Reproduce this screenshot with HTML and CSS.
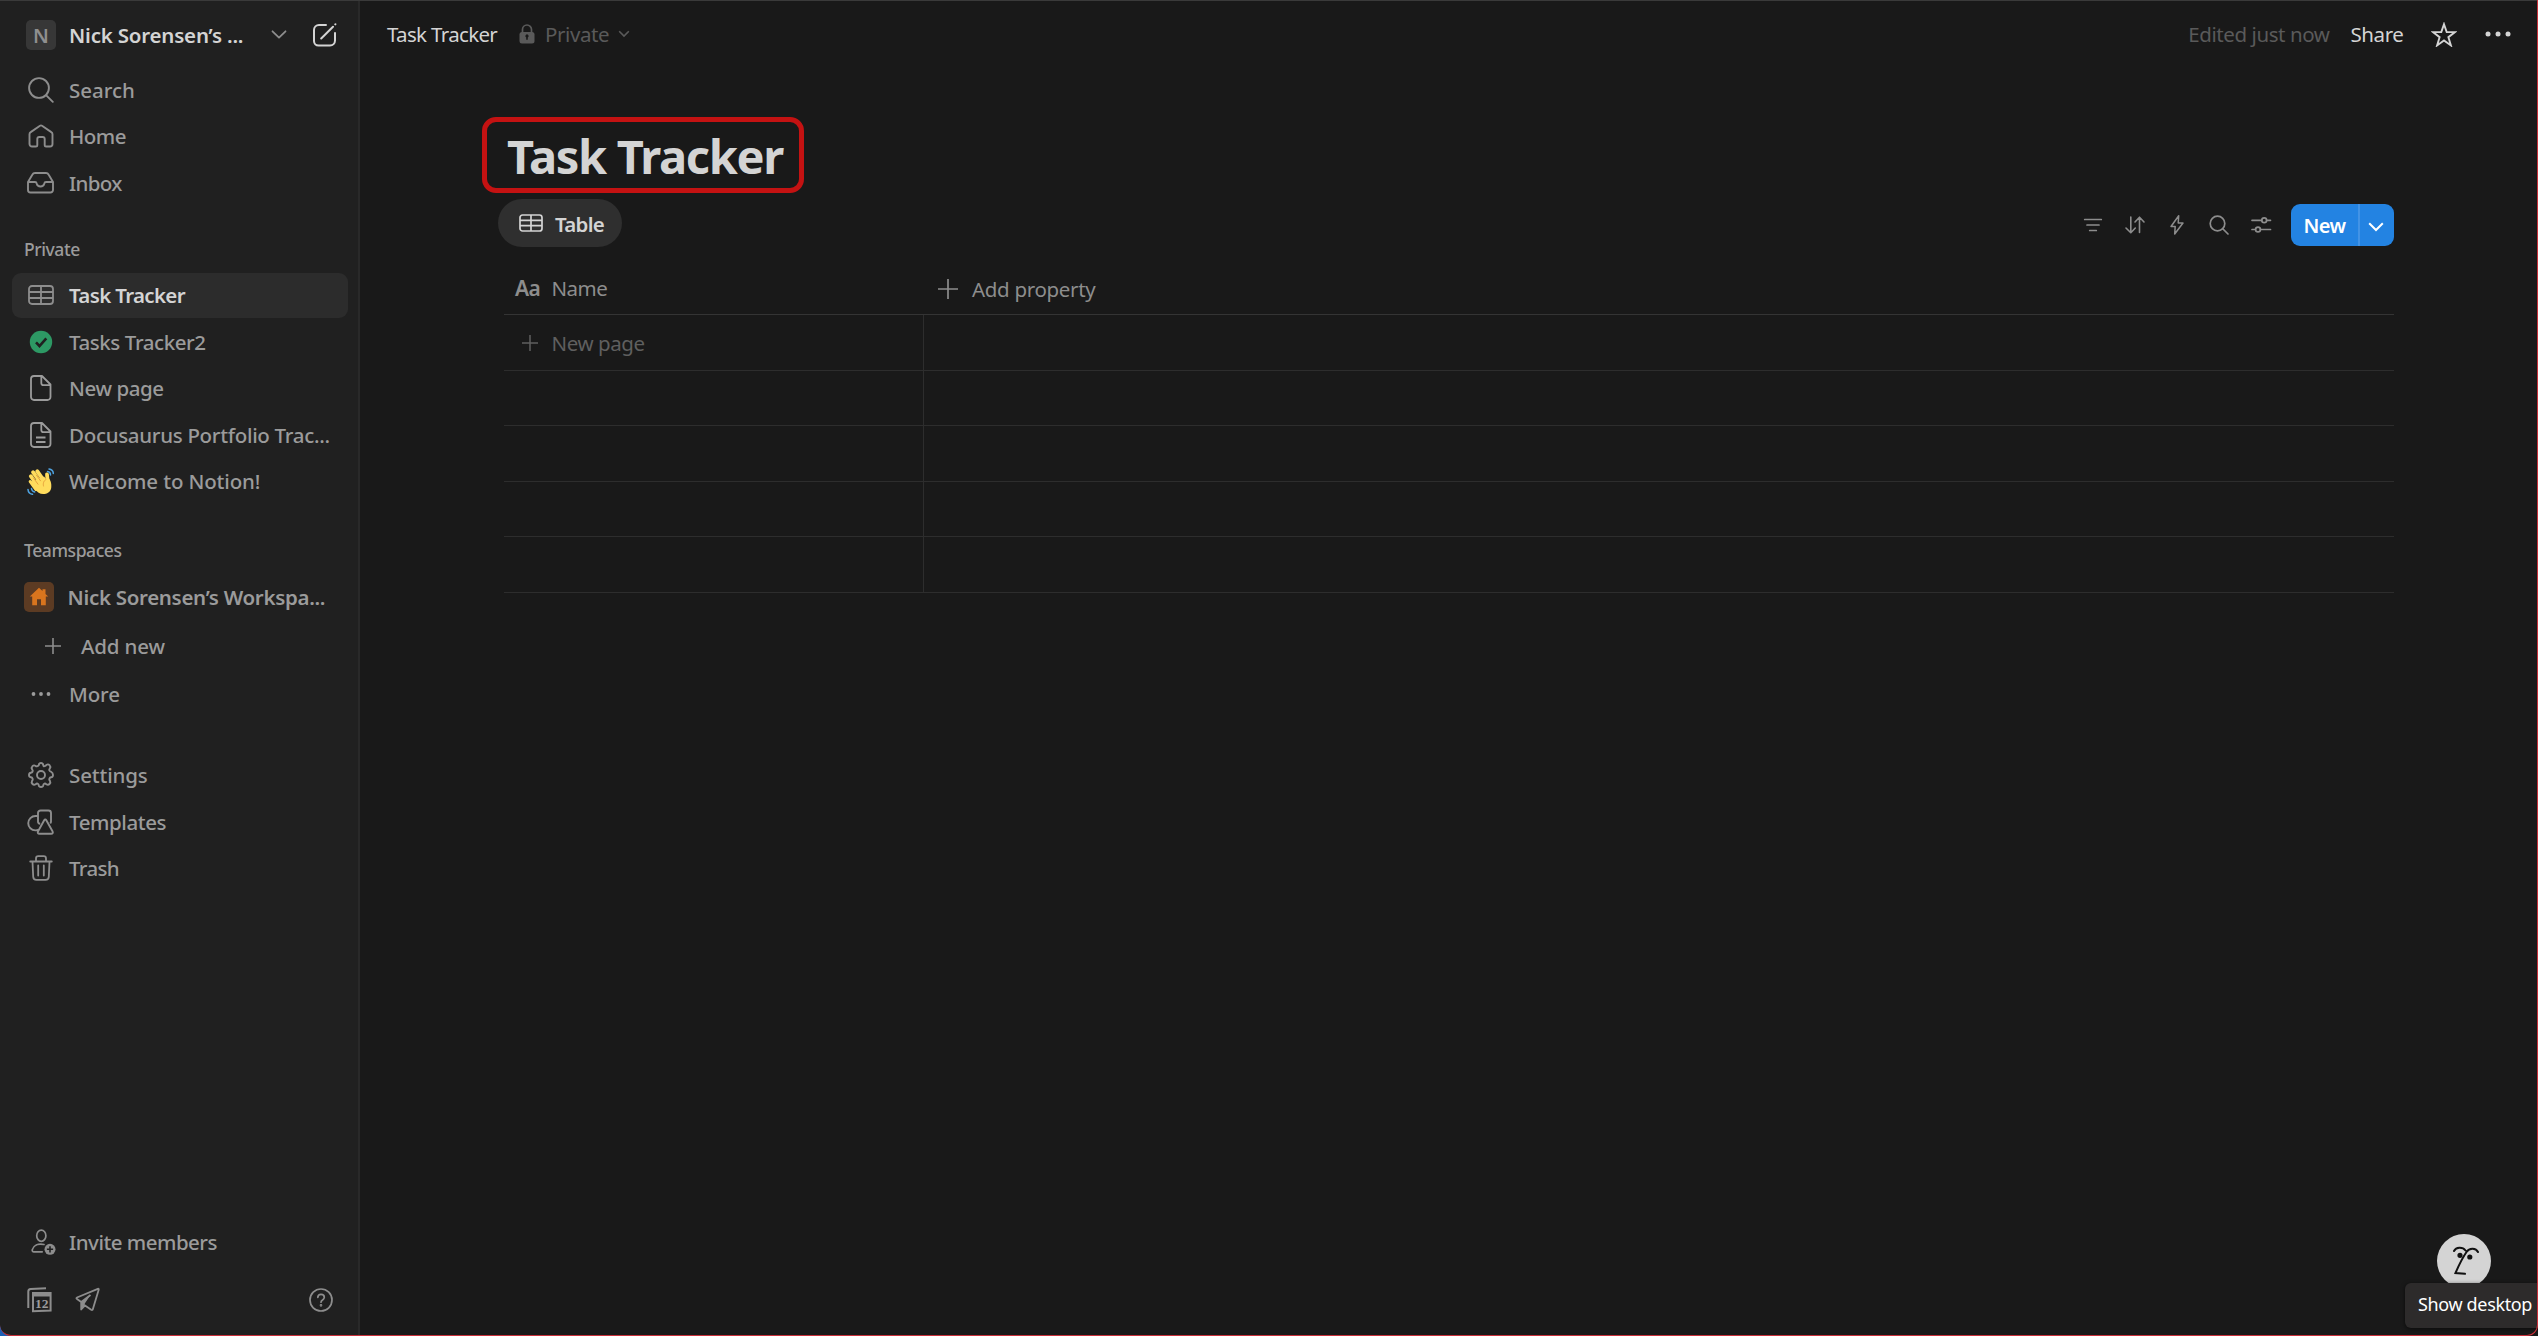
FILE: index.html
```html
<!DOCTYPE html>
<html lang="en">
<head>
<meta charset="utf-8">
<title>Task Tracker</title>
<link rel="stylesheet" href="styles.css">
</head>
<body>
<div class="app">
  <aside class="sidebar">
    <header class="workspace">
      <span class="avatar">N</span>
      <span class="workspace-name ls-2">Nick Sorensen’s ...</span>
      <svg class="workspace-caret" width="16" height="10" viewBox="0 0 16 10" fill="none" stroke="#8d8d8d" stroke-width="1.8" stroke-linecap="round" stroke-linejoin="round"><path d="M1.5 1.3 8 7.6l6.500-6.300"/></svg>
      <svg width="24" height="24" viewBox="0 0 24 24" fill="none" stroke="#d4d4d4" stroke-width="2" stroke-linecap="round"><path d="M13 2H6a5 5 0 0 0-5 5v11a4.500 4.500 0 0 0 4.500 4.500h11.500a5 5 0 0 0 5-5V10M8.200 15.500 20 3.700M22.300 1.400l.1-.1"/></svg>
    </header>
    <nav>
      <a class="item"><span class="icon"><svg width="26" height="26" viewBox="0 0 26 26" fill="none" stroke="#8d8d8d" stroke-width="1.9" stroke-linecap="round"><circle cx="11" cy="11" r="9.900"/><path d="m18.300 18.300 6.500 6.500"/></svg></span><span class="ls-0">Search</span></a>
      <a class="item"><span class="icon"><svg width="26" height="24" viewBox="0 0 26 24" fill="none" stroke="#8d8d8d" stroke-width="1.900" stroke-linejoin="round"><path d="M1.500 10.300c0-1 .4-1.700 1.200-2.200L12 1.700c.6-.4 1.400-.4 2 0l9.300 6.400c.8.500 1.200 1.200 1.200 2.200V20a2.500 2.500 0 0 1-2.500 2.500h-4c-.8 0-1.300-.5-1.300-1.300V15c0-1.300-.7-2-2-2h-3.400c-1.300 0-2 .7-2 2v6.200c0 .8-.5 1.300-1.300 1.300H4A2.500 2.500 0 0 1 1.500 20z"/></svg></span><span class="ls-5">Home</span></a>
      <a class="item"><span class="icon"><svg width="27" height="22" viewBox="0 0 27 22" fill="none" stroke="#8d8d8d" stroke-width="1.900" stroke-linejoin="round"><path d="M1 10v8a2.500 2.500 0 0 0 2.500 2.500h20A2.500 2.500 0 0 0 26 18v-8l-4.300-7.200C21 1.500 20.300 1 19 1H8C6.700 1 6 1.500 5.300 2.800zM1 10h7c1 0 1.500.5 1.700 1.500a3.900 3.900 0 0 0 7.600 0c.2-1 .7-1.500 1.700-1.500h7"/></svg></span><span class="ls-6">Inbox</span></a>
    </nav>

    <h2 class="label label-private ls-4">Private</h2>
    <nav>
      <a class="item active"><span class="icon"><svg width="26" height="20" viewBox="0 0 26 20" fill="none" stroke="#8d8d8d" stroke-width="1.800"><rect x="1" y="1" width="24" height="18" rx="3"/><path d="M1 7h24M1 13h24M13 1v18"/></svg></span><span class="ls-6">Task Tracker</span></a>
      <a class="item"><span class="icon"><svg width="24" height="24" viewBox="0 0 24 24"><circle cx="12" cy="12" r="11.200" fill="#2d9964"/><path d="m7 12.300 3.500 3.700 6.800-7.700" fill="none" stroke="#202020" stroke-width="2.600"/></svg></span><span class="ls-4">Tasks Tracker2</span></a>
      <a class="item"><span class="icon"><svg width="22" height="26" viewBox="0 0 22 26" fill="none" stroke="#9b9b9b" stroke-width="1.800" stroke-linejoin="round"><path d="M4 1h8l8.500 8.500V22a3 3 0 0 1-3 3H4a3 3 0 0 1-3-3V4a3 3 0 0 1 3-3zM11.300 1v7c0 1.500.7 2.200 2.200 2.200h7"/></svg></span><span class="ls-4">New page</span></a>
      <a class="item"><span class="icon"><svg width="22" height="26" viewBox="0 0 22 26" fill="none" stroke="#9b9b9b" stroke-width="1.800" stroke-linejoin="round"><path d="M4 1h8l8.500 8.500V22a3 3 0 0 1-3 3H4a3 3 0 0 1-3-3V4a3 3 0 0 1 3-3zM11.300 1v7c0 1.500.7 2.200 2.200 2.200h7M6 15.500h9.500M6 20h9.500"/></svg></span><span class="ls-3">Docusaurus Portfolio Trac...</span></a>
      <a class="item"><span class="icon"><svg width="27" height="27" viewBox="0 0 27 27" fill="none" stroke-linecap="round"><g stroke="#4fa3e0" stroke-width="1.500"><path d="M20.500 3.500c2 .3 3 1.600 3 3.500M22 1c2.700.4 4.200 2 4.300 4.500M4.500 20.500c.2 2 1.300 3.200 3.200 3.500M1 21.500c.2 2.700 1.700 4.400 4.500 4.800"/></g><path d="M3.200 13.500 9 21.500" stroke="#ffdc5d" stroke-width="3"/><path d="m3.800 8.200 6.700 9.300M6 4.200l7.500 10.300M10.200 3.200l7 9.800M20 6.500l.8 8" stroke="#ffdc5d" stroke-width="3.800"/><path d="M4.500 13.500 17 8.500l2.500 3 1-2c2.500 1 4.500 5.500 3.700 10.500-.8 4-4 6-8 6-3.500 0-6-2-8-4.500z" fill="#ffdc5d"/><path d="M6.500 10l4.500 6.200M9.500 7.200l4 5.600M19 11.500c-2.700 1.500-3 4-2.500 6.500" stroke="#e8a23c" stroke-width="1"/></svg></span><span class="ls-1">Welcome to Notion!</span></a>
    </nav>

    <h2 class="label label-teams ls-4">Teamspaces</h2>
    <nav>
      <a class="item item-team"><span class="team-icon"><svg width="20" height="20" viewBox="0 0 20 20" fill="#d9751e"><path d="M10 .8.800 9.500h2.400v8.700h4.800v-6h4v6h4.800V9.500h2.400l-2.700-2.600V2.200h-3v1.700z"/></svg></span><span class="ls-3">Nick Sorensen’s Workspa...</span></a>
      <a class="item item-add"><svg width="16" height="16" viewBox="0 0 16 16" stroke="#8d8d8d" stroke-width="1.600"><path d="M8 0v16M0 8h16"/></svg><span class="ls-1">Add new</span></a>
      <a class="item"><span class="icon"><svg width="20" height="6" viewBox="0 0 20 6" fill="#9b9b9b"><circle cx="2.500" cy="3" r="1.900"/><circle cx="10" cy="3" r="1.900"/><circle cx="17.500" cy="3" r="1.900"/></svg></span><span class="ls-1">More</span></a>
    </nav>
    <nav class="tools">
      <a class="item"><span class="icon"><svg width="26" height="26" viewBox="0 0 26 26" fill="none" stroke="#8d8d8d" stroke-width="1.900" stroke-linejoin="round"><path d="M10.700 3.300Q11 1 13 1t2.300 2.300q.1 1.300 1.300.9t1.700-1.200q1.800-1.300 3.200.1t.4 3.200q-1 1.100-.5 2.200.5 1.200 1.700 1.200Q25 10.800 25 13t-1.900 2.300q-1.200.2-1.700 1.300t.5 2.200q1 1.800-.4 3.200t-3.200.2q-1-.9-1.900-.5-1 .4-1.100 1.500Q15 25 13 25t-2.300-1.800q-.1-1.100-1.100-1.500-.9-.4-1.900.5-1.800 1.200-3.200-.2t-.4-3.200q1-1.100.5-2.200t-1.700-1.300Q1 15 1 13t1.900-2.300q1.200-.1 1.700-1.200t-.5-2.200Q3.100 5.500 4.500 4.100T7.700 4q.7.600 1.700.2t1.300-.9z"/><circle cx="13" cy="13" r="4"/></svg></span><span class="ls-1">Settings</span></a>
      <a class="item"><span class="icon"><svg width="27" height="26" viewBox="0 0 27 26" fill="none" stroke="#8d8d8d" stroke-width="1.900" stroke-linejoin="round"><path d="M10.700 7H8.500a7.200 7.200 0 0 0-.1 14.400c1.500 0 2.500-.2 3.500-.8M11 13.200V4a2.500 2.500 0 0 1 2.500-2.500h8A2.500 2.500 0 0 1 24 4v8.500c0 .8-.3 1.400-.8 1.900M11 12.500c0 1.400.8 2.200 2.200 2.300M17.200 11.300c.6-1 1.500-1 2.100 0l6.200 11c.7 1.400.2 2.500-1.300 2.500H12.400c-1.500 0-2-1.100-1.300-2.500z"/></svg></span><span class="ls-4">Templates</span></a>
      <a class="item"><span class="icon"><svg width="24" height="26" viewBox="0 0 24 26" fill="none" stroke="#8d8d8d" stroke-width="1.800" stroke-linecap="round" stroke-linejoin="round"><path d="M1.200 6.500h21.600M7 6.200V3.500C7 2 7.800 1.200 9.300 1.200h5.400c1.500 0 2.300.8 2.300 2.300v2.700M3.500 6.700l.7 15c.1 2 1.300 3.100 3.300 3.100h9c2 0 3.200-1.100 3.300-3.100l.7-15M9.200 10.500v10M14.800 10.500v10"/></svg></span><span class="ls-6">Trash</span></a>
    </nav>

    <nav class="bottom">
      <a class="item"><span class="icon icon-invite"><svg width="25" height="26" viewBox="0 0 25 26" fill="none" stroke="#8d8d8d" stroke-width="1.700" stroke-linecap="round"><ellipse cx="10.300" cy="6.700" rx="4.600" ry="5.600"/><path d="M13 15.500c-6-1.300-10.500.8-11.700 5.200-.3 1.400.3 2.100 1.600 2.100h8.300"/><circle cx="19" cy="20.300" r="5.500" fill="#8d8d8d" stroke="none"/><path d="M19 17.200v6.200M15.900 20.300h6.200" stroke="#202020" stroke-width="1.600" stroke-linecap="butt"/></svg></span><span class="ls-5">Invite members</span></a>
      <div class="links">
        <svg width="25" height="26" viewBox="0 0 25 26"><g fill="none" stroke="#8d8d8d" stroke-width="2"><path d="M1.300 21V4.500C1.300 2.800 2 2 3.700 1.900L19 1.300"/><path d="M6 6h17.600v17.500L6 24.300z"/></g><path d="M5.500 5.500h18.500v4H5.500z" fill="#8d8d8d"/><text x="14.800" y="21" text-anchor="middle" class="calendar-day">12</text></svg>
        <svg width="25" height="25" viewBox="0 0 25 25" fill="none" stroke="#8d8d8d" stroke-width="1.800" stroke-linejoin="round"><path d="M22.800 1.800 2 10.500c-.8.400-.8 1 0 1.500l4.200 3v7.500l3.800-4 6.200 4.300c.8.500 1.500.2 1.700-.7l5.800-19.300c.2-.8-.2-1.300-.9-1zM6.200 15 15.500 8"/><path d="M6.200 15 15.500 8 9.800 16.500v2L6.200 22z" fill="#8d8d8d" stroke="none"/></svg>
        <svg class="help" width="24" height="24" viewBox="0 0 24 24" fill="none" stroke="#8d8d8d" stroke-width="1.700" stroke-linecap="round"><circle cx="12" cy="12" r="11"/><path d="M8.800 9.400C8.900 7.500 10.200 6.400 12 6.400s3.300 1.200 3.300 2.900c0 1.300-.7 2-1.700 2.600s-1.600 1.200-1.600 2.300"/><circle cx="12" cy="17.300" r=".5"/></svg>
      </div>
    </nav>
  </aside>

  <main class="main">
    <header class="topbar">
      <span class="crumb ls-6">Task Tracker</span>
      <svg class="lock" width="16" height="20" viewBox="0 0 16 20"><path d="M3.500 9V5.500a4.500 4.500 0 0 1 9 0V9" fill="none" stroke="#5a5a5a" stroke-width="1.700"/><rect x=".5" y="8" width="15" height="11.500" rx="2.500" fill="#5a5a5a"/><path d="M7.200 13.500a1.600 1.600 0 1 1 1.600 0v2.300H7.200z" fill="#191919"/></svg>
      <span class="privacy ls-4">Private</span>
      <svg width="12" height="8" viewBox="0 0 12 8" fill="none" stroke="#5a5a5a" stroke-width="1.600"><path d="m1.200 1.300 4.800 4.800 4.800-4.800"/></svg>
      <span class="edited ls-4">Edited just now</span>
      <span class="share ls-4">Share</span>
      <svg class="star" width="26" height="25" viewBox="0 0 26 25" fill="none" stroke="#d4d4d4" stroke-width="1.900"><path d="m13 2.200 2.700 7.900h8.400l-6.700 5.100 2.500 8.200-6.900-4.900-6.900 4.900 2.500-8.200-6.700-5.100h8.400z"/></svg>
      <svg width="26" height="6" viewBox="0 0 26 6" fill="#d4d4d4"><circle cx="3" cy="3" r="2.500"/><circle cx="13" cy="3" r="2.500"/><circle cx="23" cy="3" r="2.500"/></svg>
    </header>

    <section class="page">
      <h1 class="title">Task Tracker</h1>
      <div class="viewbar">
        <span class="tab"><svg width="24" height="18" viewBox="0 0 24 18" fill="none" stroke="#d4d4d4" stroke-width="1.700"><rect x="1" y="1" width="22" height="16" rx="2.500"/><path d="M1 6.300h22M1 11.700h22M12 1v16"/></svg><span class="tab-name">Table</span></span>
        <div class="actions">
          <svg width="22" height="22" viewBox="0 0 22 22" fill="none" stroke="#8d8d8d" stroke-width="1.700" stroke-linecap="round"><path d="M2.700 5.500h16.600M5 11h12M7.700 16.500h6.600"/></svg>
          <svg width="22" height="22" viewBox="0 0 22 22" fill="none" stroke="#8d8d8d" stroke-width="1.600" stroke-linecap="round" stroke-linejoin="round"><path d="M6.800 3v15.500M2 14l4.800 4.700 4.500-4.700M15.500 18.500V3.300M11 8l4.500-4.700L20 8"/></svg>
          <svg width="22" height="22" viewBox="0 0 22 22" fill="none" stroke="#8d8d8d" stroke-width="1.500" stroke-linejoin="round"><path d="M12.700 1.800 5 12.500h4.200L8.700 20l8.300-11h-4.800z"/></svg>
          <svg width="22" height="22" viewBox="0 0 22 22" fill="none" stroke="#8d8d8d" stroke-width="1.700" stroke-linecap="round"><circle cx="9.500" cy="9.500" r="7.300"/><path d="m15 15 5 5"/></svg>
          <svg width="22" height="22" viewBox="0 0 22 22" fill="none" stroke="#8d8d8d" stroke-width="1.700" stroke-linecap="round"><path d="M2 6.300h9.700M16.700 6.300h3.800M2 15.500h3.300M10.500 15.500h10"/><circle cx="14.200" cy="6.300" r="2.400"/><circle cx="8" cy="15.500" r="2.400"/></svg>
          <button class="new"><span class="new-label">New</span><span class="new-caret"><svg width="16" height="10" viewBox="0 0 16 10" fill="none" stroke="#fff" stroke-width="2"><path d="m1.200 1.300 6.800 6.700 6.800-6.700"/></svg></span></button>
        </div>
      </div>

      <div class="table">
        <div class="table-head">
          <div class="name-cell"><span class="type-icon">Aa</span><span class="ls-5">Name</span></div>
          <div class="add-property"><svg width="20" height="20" viewBox="0 0 20 20" stroke="#8d8d8d" stroke-width="1.700"><path d="M10 0v20M0 10h20"/></svg><span class="ls-3">Add property</span></div>
        </div>
        <div class="table-row"><div class="cell new-page"><svg width="16" height="16" viewBox="0 0 16 16" stroke="#5f5f5f" stroke-width="1.500"><path d="M8 0v16M0 8h16"/></svg><span class="ls-4">New page</span></div></div>
        <div class="table-row"><div class="cell"></div></div>
        <div class="table-row"><div class="cell"></div></div>
        <div class="table-row"><div class="cell"></div></div>
        <div class="table-row"><div class="cell"></div></div>
      </div>
    </section>
  </main>

  <svg class="assistant" width="56" height="56" viewBox="0 0 56 56" fill="none" stroke="#111" stroke-width="2" stroke-linecap="round"><circle cx="28" cy="28" r="27" fill="#d4d4d4" stroke="none"/><path d="M18 18c2-4 8.500-4.500 11.500-.5M42 19c-2-4-8.500-4.500-11.500 0-4.500 6.500-8 14-11 21l9.500.8"/><circle cx="24" cy="22.300" r="1.600" fill="#111"/><circle cx="33.800" cy="24" r="1.600" fill="#111"/></svg>
  <div class="tooltip">Show desktop</div>
  <div class="corner"></div>
  <div class="frame"></div>
</div>
</body>
</html>
```
FILE: styles.css
```css
* { box-sizing: border-box; }

body {
  margin: 0;
  background: #191919;
  color: #9b9b9b;
  font: 500 20.5px/24px "Noto Sans", "Open Sans", sans-serif;
}

svg { display: block; flex: none; }

.app {
  position: relative;
  display: flex;
  width: 2538px;
  height: 1336px;
  overflow: hidden;
  white-space: nowrap;
}

/* Letter-spacing steps, from neutral to tightest */
.ls-0 { letter-spacing: 0; }
.ls-1 { letter-spacing: -0.14px; }
.ls-2 { letter-spacing: -0.2px; }
.ls-3 { letter-spacing: -0.31px; }
.ls-4 { letter-spacing: -0.42px; }
.ls-5 { letter-spacing: -0.51px; }
.ls-6 { letter-spacing: -0.66px; }

/* Sidebar */
.sidebar {
  display: flex;
  flex-direction: column;
  flex: none;
  width: 360px;
  padding: 1px 10px 0 12px;
  background: #202020;
  border-right: 2px solid #292929;
}

.workspace {
  display: flex;
  align-items: center;
  height: 65.4px;
  padding: 3px 0 0 14px;
}

.avatar {
  width: 30px;
  height: 30px;
  margin-right: 13px;
  border-radius: 5px;
  background: #373737;
  color: #8f8f8f;
  font-size: 20px;
  font-weight: 600;
  line-height: 31px;
  text-align: center;
}

.workspace-name {
  width: 202px;
  color: #d4d4d4;
  font-weight: 600;
}

.workspace-caret { margin-right: 26px; }

.item {
  display: flex;
  align-items: center;
  height: 46.5px;
  padding-left: 12px;
  border-radius: 9px;
}

.icon {
  display: flex;
  flex: none;
  justify-content: center;
  width: 27px;
  margin: 0 15px 0 3px;
}

.icon-invite { padding-left: 5px; }

.active {
  height: 45px;
  margin: .75px 0;
  background: #2c2c2c;
  color: #d4d4d4;
  font-weight: 600;
}

.label {
  margin: 0;
  padding-left: 12px;
  font-size: 17.5px;
  font-weight: 500;
  line-height: 46px;
}

.label-private { padding-top: 20px; }
.label-teams { padding-top: 23px; }

.item-team { font-weight: 600; }

.team-icon {
  display: grid;
  place-items: center;
  width: 30px;
  height: 30px;
  margin-right: 13.5px;
  border-radius: 5px;
  background: #5c3b23;
}

.item-add {
  gap: 20px;
  height: 50.4px;
  padding: 1.2px 0 0 33px;
}

.tools { padding-top: 35px; }

.bottom { margin-top: auto; }

.links {
  display: flex;
  align-items: center;
  gap: 23px;
  height: 71px;
  padding: 0 0 2px 15px;
}

.help { margin: 0 15px 0 auto; }

.calendar-day {
  fill: #9b9b9b;
  font: 700 13.5px "Liberation Serif", serif;
}

/* Main area */
.main {
  display: flex;
  flex-direction: column;
  flex: 1;
  font-weight: 400;
}

.topbar {
  display: flex;
  align-items: center;
  height: 68px;
  padding: 0 27.5px 0 27px;
}

.crumb { width: 132px; color: #d4d4d4; }
.lock { margin-right: 10px; }
.privacy { width: 73px; color: #5a5a5a; }
.edited { margin-left: auto; color: #5a5a5a; }
.share { width: 80px; margin-left: 21px; color: #d4d4d4; }
.star { margin-right: 28px; }

.page { padding: 49px 144px 0 122px; }

.title {
  width: 322px;
  height: 76px;
  margin: 0;
  padding-left: 20px;
  border: 5px solid #c41212;
  border-radius: 14px;
  color: #d4d4d4;
  font-size: 47px;
  font-weight: 700;
  letter-spacing: -1.34px;
  line-height: 69px;
}

.viewbar {
  display: flex;
  align-items: center;
  justify-content: space-between;
  height: 48px;
  margin: 6px 0 0 16px;
}

.tab {
  display: flex;
  align-items: center;
  gap: 12px;
  width: 124px;
  height: 48px;
  padding-left: 21px;
  border-radius: 24px;
  background: #2f2f2f;
  color: #d4d4d4;
  font-weight: 600;
}

.tab-name { padding-top: 1px; letter-spacing: -0.7px; }

.actions {
  display: flex;
  align-items: center;
  gap: 20px;
  padding-top: 4px;
}

.new {
  display: flex;
  width: 103px;
  height: 42px;
  margin-left: -1px;
  padding: 0;
  border: 0;
  border-radius: 9px;
  overflow: hidden;
  background: #2383e2;
  color: #fff;
  font: 600 20px/43px "Noto Sans", sans-serif;
}

.new-label {
  width: 69px;
  padding-left: 12.5px;
  border-right: 2px solid #4293e6;
  letter-spacing: -0.55px;
  text-align: left;
}

.new-caret { display: grid; place-items: center; width: 34px; padding: 3px 2px 0 0; }

.table { margin-left: 22px; }

.table-head {
  display: flex;
  align-items: center;
  height: 68px;
  padding-top: 15px;
  border-bottom: 1px solid #343434;
  color: #8d8d8d;
}

.name-cell { display: flex; width: 434px; padding-left: 11px; }

.type-icon {
  width: 36.5px;
  font-size: 21px;
  font-weight: 600;
  letter-spacing: -0.5px;
}

.add-property { display: flex; align-items: center; gap: 14px; padding-top: 1px; }

.table-row { height: 55.5px; border-bottom: 1px solid #2d2d2d; }

.cell {
  height: 100%;
  width: 420px;
  border-right: 1px solid #2d2d2d;
}

.new-page {
  display: flex;
  align-items: center;
  gap: 13.5px;
  padding: 1px 0 0 18px;
  color: #5f5f5f;
}

/* Overlays */
.assistant { position: absolute; left: 2436px; top: 1233px; }

.tooltip {
  position: absolute;
  left: 2405px;
  top: 1283px;
  width: 140px;
  height: 45px;
  padding-left: 13px;
  border-radius: 6px 0 0 6px;
  background: #2d2b2b;
  box-shadow: 0 1px 4px #0009;
  color: #fff;
  font-size: 18px;
  font-weight: 400;
  letter-spacing: -0.35px;
  line-height: 43px;
}

.corner {
  position: absolute;
  left: 0;
  bottom: 0;
  width: 11px;
  height: 11px;
  background: radial-gradient(circle at 100% 0, transparent 10.5px, #1b5fb5 11px);
}

.frame {
  position: absolute;
  inset: 0;
  border: solid #c9303a;
  border-width: 0 1px 1px 0;
  border-radius: 0 0 11px 11px;
  box-shadow: inset 0 1px #3a3a3a;
}
```
